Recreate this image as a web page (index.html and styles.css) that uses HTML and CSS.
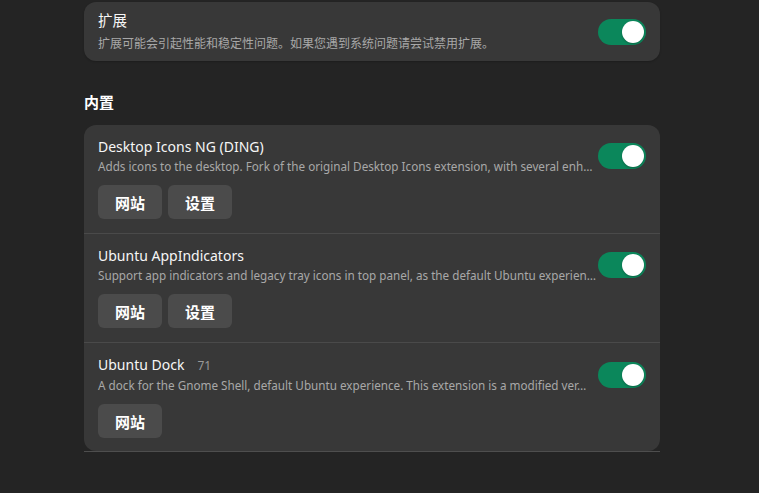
FILE: index.html
```html
<!DOCTYPE html>
<html lang="zh-CN">
<head>
<meta charset="utf-8">
<title>扩展</title>
<link rel="stylesheet" href="styles.css">
</head>
<body>
<div class="page">
  <div class="card card-top">
    <div class="row row-simple">
      <div class="text">
        <div class="title title-cjk">扩展</div>
        <div class="desc desc-cjk">扩展可能会引起性能和稳定性问题。如果您遇到系统问题请尝试禁用扩展。</div>
      </div>
      <div class="switch on"><span class="knob"></span></div>
    </div>
  </div>

  <h2 class="heading">内置</h2>

  <div class="list-wrap">
    <div class="card">
      <div class="row">
        <div class="head">
          <div class="text">
            <div class="title">Desktop Icons NG (DING)</div>
            <div class="desc">Adds icons to the desktop. Fork of the original Desktop Icons extension, with several enh…</div>
          </div>
          <div class="switch on"><span class="knob"></span></div>
        </div>
        <div class="buttons">
          <button class="btn">网站</button>
          <button class="btn">设置</button>
        </div>
      </div>
      <div class="row">
        <div class="head">
          <div class="text">
            <div class="title">Ubuntu AppIndicators</div>
            <div class="desc">Support app indicators and legacy tray icons in top panel, as the default Ubuntu experien…</div>
          </div>
          <div class="switch on"><span class="knob"></span></div>
        </div>
        <div class="buttons">
          <button class="btn">网站</button>
          <button class="btn">设置</button>
        </div>
      </div>
      <div class="row row-last">
        <div class="head">
          <div class="text">
            <div class="title">Ubuntu Dock<span class="version">71</span></div>
            <div class="desc">A dock for the Gnome Shell, default Ubuntu experience. This extension is a modified ver…</div>
          </div>
          <div class="switch on"><span class="knob"></span></div>
        </div>
        <div class="buttons">
          <button class="btn">网站</button>
        </div>
      </div>
    </div>
  </div>
</div>
</body>
</html>
```

FILE: styles.css
```css
html, body {
  margin: 0;
  padding: 0;
  background: #242424;
  height: 100%;
  overflow: hidden;
}

body {
  font-family: "Noto Sans", "Noto Sans CJK SC", sans-serif;
  color: #ffffff;
}

.page {
  width: 576px;
  margin-left: 84px;
  padding-top: 2px;
}

.card {
  background: #383838;
  border-radius: 12px;
  overflow: hidden;
}

.card-top {
  box-shadow: 0 1px 2px rgba(0, 0, 0, 0.2);
}

.row {
  padding: 12px 14px 14px 14px;
  border-bottom: 1px solid #4a4a4a;
}

.row-last {
  border-bottom: none;
  padding-bottom: 13px;
}

.row-simple {
  display: flex;
  align-items: center;
  padding: 8px 14px;
  border-bottom: none;
}

.head {
  display: flex;
  align-items: center;
}

.text {
  flex: 1;
  min-width: 0;
  margin-right: 1px;
}

.title {
  font-size: 14px;
  line-height: 20px;
  color: #f6f6f6;
  white-space: nowrap;
}

.title-cjk {
  font-size: 14.5px;
}

.desc {
  font-size: 11.7px;
  line-height: 18px;
  color: #a8a8a8;
  white-space: nowrap;
}

.desc-cjk {
  font-size: 12px;
  margin-top: 5px;
}

.version {
  font-size: 12px;
  color: #9a9a9a;
  margin-left: 13px;
}

.switch {
  flex: none;
  width: 48px;
  height: 26px;
  border-radius: 13px;
  background: #0b875b;
  display: flex;
  align-items: center;
  justify-content: flex-end;
  padding: 0 2px;
  box-sizing: border-box;
}

.knob {
  width: 22px;
  height: 22px;
  border-radius: 50%;
  background: #ffffff;
  box-shadow: 0 1px 2px rgba(0, 0, 0, 0.25);
}

.heading {
  margin: 31px 0 13px 0;
  font-size: 15px;
  line-height: 20px;
  font-weight: 700;
  color: #ffffff;
}

.list-wrap {
  border-bottom: 1px solid #4e4e4e;
}

.buttons {
  display: flex;
  gap: 6px;
  margin-top: 10px;
}

.btn {
  width: 64px;
  height: 34px;
  border: none;
  border-radius: 6px;
  background: #4b4b4b;
  color: #ffffff;
  font-family: "Noto Sans CJK SC", "Noto Sans", sans-serif;
  font-size: 15px;
  font-weight: 700;
  padding: 0;
}
```
